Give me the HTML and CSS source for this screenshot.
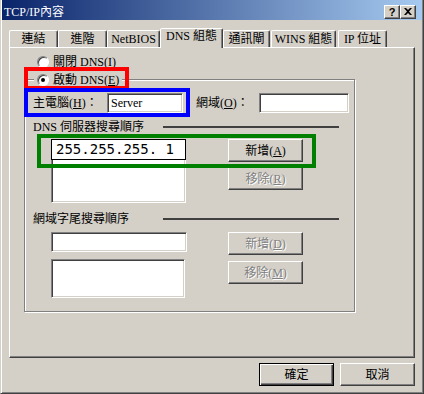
FILE: index.html
```html
<!DOCTYPE html>
<html lang="zh-Hant">
<head>
    <meta charset="UTF-8">
    <title>TCP/IP內容</title>
    <link rel="stylesheet" href="styles.css">
</head>
<body>
    <div class="window">
        <div class="titlebar">
            <span class="title">TCP/IP內容</span>
            <div class="title-btns">
                <span class="tbtn help">?</span>
                <span class="tbtn">
                    <svg width="8" height="7" viewBox="0 0 8 7">
                        <path d="M0 0h2l2 2 2-2h2L5 3.5 8 7H6L4 5 2 7H0l3-3.5z" fill="#000"/>
                    </svg>
                </span>
            </div>
        </div>

        <div class="body">
            <div class="tabs">
                <div class="tab t1">連結</div>
                <div class="tab t2">進階</div>
                <div class="tab t3">NetBIOS</div>
                <div class="tab t4 active">DNS 組態</div>
                <div class="tab t5">通訊閘</div>
                <div class="tab t6">WINS 組態</div>
                <div class="tab t7">IP 位址</div>
            </div>

            <div class="panel">
                <div class="radio-row">
                    <span class="radio"></span>
                    <span>關閉 DNS(<u>I</u>)</span>
                </div>

                <div class="group">
                    <div class="legend">
                        <span class="radio on"></span>
                        <span>啟動 DNS(<u>E</u>)</span>
                    </div>

                    <div class="host-row">
                        <span class="lbl host-lbl">主電腦(<u>H</u>)：</span>
                        <div class="input host-input">Server</div>
                        <span class="lbl domain-lbl">網域(<u>O</u>)：</span>
                        <div class="input domain-input"></div>
                    </div>

                    <div class="section-head">
                        <span>DNS 伺服器搜尋順序</span>
                        <span class="rule"></span>
                    </div>

                    <div class="list-block dns">
                        <div class="list-col">
                            <div class="edit-inline">255.255.255. 1</div>
                            <div class="listbox open-top"></div>
                        </div>
                        <div class="btn-col">
                            <div class="btn">新增(<u>A</u>)</div>
                            <div class="btn disabled">移除(<u>R</u>)</div>
                        </div>
                    </div>

                    <div class="section-head suffix-head">
                        <span>網域字尾搜尋順序</span>
                        <span class="rule"></span>
                    </div>

                    <div class="list-block suffix">
                        <div class="list-col">
                            <div class="input suffix-input"></div>
                            <div class="listbox suffix-list"></div>
                        </div>
                        <div class="btn-col wide-gap">
                            <div class="btn disabled">新增(<u>D</u>)</div>
                            <div class="btn disabled">移除(<u>M</u>)</div>
                        </div>
                    </div>

                    <!-- highlight boxes drawn over the dialog -->
                    <div class="mark mark-red"></div>
                    <div class="mark mark-blue"></div>
                    <div class="mark mark-green"></div>
                </div>
            </div>

            <div class="footer">
                <div class="btn default">確定</div>
                <div class="btn">取消</div>
            </div>
        </div>
    </div>
</body>
</html>
```

FILE: styles.css
```css
* { box-sizing: border-box; }

body {
    margin: 0;
    background: #d4d0c8;
    font-family: "Liberation Serif", "Noto Sans CJK TC", serif;
    font-size: 12px;
    line-height: 14px;
    color: #000;
}

u { text-decoration: underline; text-underline-offset: 1px; }

.window {
    width: 424px;
    height: 394px;
    border: 1px solid;
    border-top: 0;
    border-color: #d4d0c8 #404040 #404040 #d4d0c8;
    box-shadow: inset 1px 0 #fff, inset -1px -1px #808080;
    padding: 0 1px 1px 1px;
}

/* title bar */
.titlebar {
    height: 20px;
    display: flex;
    align-items: center;
    justify-content: space-between;
    padding: 3px 6px 0 2px;
    background: linear-gradient(to right, #0a246a, #a6caf0);
    color: #fff;
}

.title-btns { display: flex; }

.tbtn {
    width: 16px;
    height: 14px;
    display: flex;
    align-items: center;
    justify-content: center;
    background: #d4d0c8;
    border: 1px solid;
    border-color: #fff #404040 #404040 #fff;
    box-shadow: inset -1px -1px #808080;
}

.tbtn.help {
    font: bold 11px/12px "Liberation Sans", sans-serif;
    color: #000;
}

.body { padding: 0 7px; }

/* tabs */
.tabs {
    display: flex;
    align-items: flex-end;
    height: 19px;
    margin-top: 8px;
}

.tab {
    height: 17px;
    padding-top: 1px;
    text-align: center;
    border: 1px solid;
    border-bottom: 0;
    border-color: #fff #404040 transparent #fff;
    box-shadow: inset -1px 0 #808080;
    border-radius: 2px 2px 0 0;
    white-space: nowrap;
}

.t1 { width: 49px; }
.t2 { width: 49px; }
.t3 { width: 53px; }
.t4 { width: 63px; }
.t5 { width: 47px; }
.t6 { width: 65px; margin-left: 1px; }
.t7 { width: 49px; margin-left: 2px; }

.tab.active {
    height: 20px;
    margin-bottom: -1px;
    padding-top: 0;
    position: relative;
    z-index: 1;
    background: #d4d0c8;
}

/* page */
.panel {
    height: 311px;
    border: 1px solid;
    border-color: #fff #404040 #404040 #fff;
    box-shadow: inset -1px -1px #808080;
}

.radio-row {
    display: flex;
    align-items: center;
    gap: 4px;
    height: 14px;
    margin: 7px 0 0 27px;
}

.radio {
    position: relative;
    flex: none;
    width: 12px;
    height: 12px;
    border-radius: 50%;
    background: #fff;
    border: 1px solid;
    border-color: #808080 #fff #fff #808080;
    box-shadow: inset 1px 1px #404040;
}

.radio.on::after {
    content: "";
    position: absolute;
    left: 3px;
    top: 3px;
    width: 4px;
    height: 4px;
    border-radius: 50%;
    background: #000;
}

.group {
    position: relative;
    width: 331px;
    height: 233px;
    margin: 10px 0 0 14px;
    padding-left: 8px;
    border: 1px solid #808080;
    box-shadow: inset 1px 1px #fff, 1px 1px #fff;
}

.legend {
    display: flex;
    align-items: center;
    gap: 4px;
    width: fit-content;
    height: 14px;
    margin: -7px 0 0 1px;
    padding: 0 3px;
    background: #d4d0c8;
}

.host-row {
    display: flex;
    align-items: center;
    height: 20px;
    margin-top: 6px;
}

.host-lbl { width: 74px; }
.domain-lbl { width: 63px; margin-left: 13px; }

.input {
    height: 20px;
    background: #fff;
    border: 1px solid;
    border-color: #808080 #fff #fff #808080;
    box-shadow: inset 1px 1px #404040, inset -1px -1px #d4d0c8;
    padding: 2px 0 0 3px;
}

.host-input { width: 76px; }
.domain-input { width: 90px; }

.section-head {
    display: flex;
    align-items: center;
    height: 14px;
    margin-top: 7px;
}

.section-head .rule {
    width: 176px;
    height: 2px;
    margin: 0 15px 0 auto;
    background: #404040;
}

.suffix-head { margin-top: 9px; }

.list-block {
    display: flex;
    margin: 5px 0 0 18px;
}

.list-block.suffix { margin-top: 6px; }

.list-col { width: 136px; }

.edit-inline {
    width: 135px;
    height: 21px;
    border: 1px solid #000;
    background: #fff;
    padding-left: 4px;
    font: 14px/19px "DejaVu Sans Mono", monospace;
}

.listbox {
    background: #fff;
    border: 1px solid;
    border-color: #808080 #fff #fff #808080;
    box-shadow: inset 1px 1px #404040, inset -1px -1px #d4d0c8;
}

.listbox.open-top {
    width: 135px;
    height: 43px;
    border-top: 0;
    box-shadow: inset 1px 0 #404040, inset -1px -1px #d4d0c8;
}

.suffix-input { width: 136px; }

.suffix-list {
    width: 134px;
    height: 39px;
    margin-top: 7px;
}

.btn-col {
    display: flex;
    flex-direction: column;
    gap: 5px;
    margin-left: 41px;
}

.btn-col.wide-gap { gap: 6px; }

.btn {
    width: 75px;
    height: 23px;
    display: flex;
    align-items: center;
    justify-content: center;
    background: #d4d0c8;
    border: 1px solid;
    border-color: #fff #404040 #404040 #fff;
    box-shadow: inset -1px -1px #808080;
}

.btn.disabled {
    color: #808080;
    text-shadow: 1px 1px #fff;
}

.btn.default {
    border: 1px solid #000;
    box-shadow: inset 1px 1px #fff, inset -1px -1px #404040, inset -2px -2px #808080;
}

.footer {
    display: flex;
    justify-content: flex-end;
    gap: 6px;
    margin-top: 5px;
}

/* annotation rectangles */
.mark {
    position: absolute;
    border: 4px solid;
}

.mark-red { left: -1px; top: -13px; width: 105px; height: 23px; border-color: #f00; }
.mark-blue { left: -1px; top: 8px; width: 166px; height: 29px; border-color: #00f; }
.mark-green { left: 12px; top: 54px; width: 279px; height: 34px; border-color: #008000; }
```
